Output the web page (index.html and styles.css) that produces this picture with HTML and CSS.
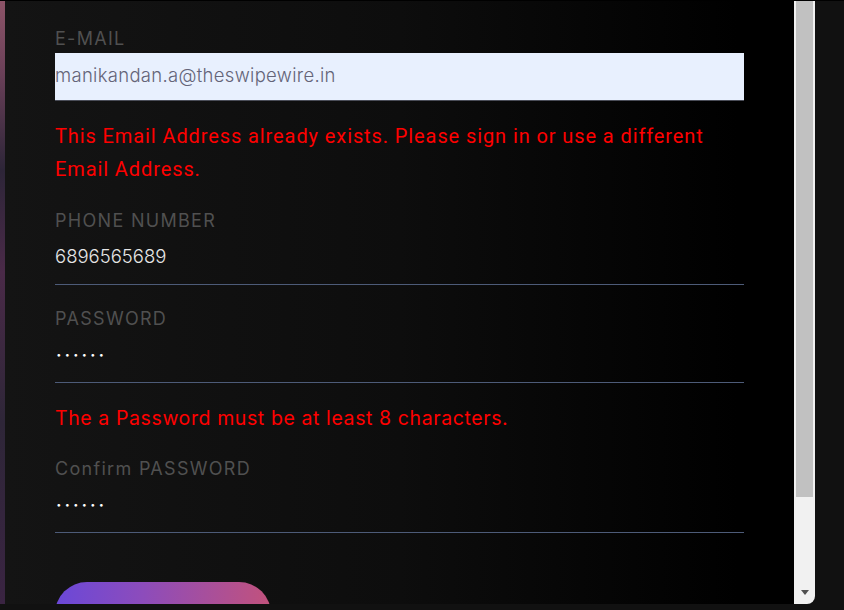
FILE: index.html
```html
<!DOCTYPE html>
<html lang="en">
<head>
<meta charset="utf-8">
<title>Sign up</title>
<link rel="stylesheet" href="styles.css">
</head>
<body>
<div class="window">
  <div class="edge"></div>
  <div class="panel">
    <form class="form">
      <div class="field">
        <label class="label">E-MAIL</label>
        <div class="input autofill">manikandan.a@theswipewire.in</div>
      </div>
      <p class="error condensed">This Email Address already exists. Please sign in or use a different Email Address.</p>
      <div class="field">
        <label class="label">PHONE NUMBER</label>
        <div class="input">6896565689</div>
      </div>
      <div class="field">
        <label class="label">PASSWORD</label>
        <div class="input dots">••••••</div>
      </div>
      <p class="error">The a Password must be at least 8 characters.</p>
      <div class="field">
        <label class="label">Confirm PASSWORD</label>
        <div class="input dots">••••••</div>
      </div>
      <button type="button" class="submit" aria-label="Sign Up"></button>
    </form>
  </div>
  <div class="scrollbar">
    <div class="thumb"></div>
    <svg class="arrow" width="8" height="5" viewBox="0 0 8 5"><path d="M0 0H8L4 5Z" fill="#505050"/></svg>
  </div>
</div>
</body>
</html>
```

FILE: styles.css
```css
html, body {
  margin: 0;
  padding: 0;
}
body {
  width: 844px;
  height: 610px;
  overflow: hidden;
  background: #111111;
  border-top: 1px solid #000;
  box-sizing: border-box;
  font-family: Inter, "Open Sans", sans-serif;
}
.window {
  display: flex;
  height: 603px;
  width: 815px;
}
.edge {
  width: 5px;
  flex: none;
  background: linear-gradient(#8d5468 0%, #6a4058 12%, #2d2538 28%, #4a2a48 45%, #2e2638 70%, #3a2442 100%);
}
.panel {
  flex: 1;
  overflow: hidden;
  background: linear-gradient(to right, #141414 0%, #0d0d0d 50%, #000 93%);
  padding-left: 50px;
  padding-right: 50px;
}
.form {
  display: flex;
  flex-direction: column;
  width: 689px;
  padding-top: 25px;
}
.field {
  display: flex;
  flex-direction: column;
}
.label {
  font-size: 18px;
  line-height: 24px;
  letter-spacing: 1.3px;
  color: #505050;
  padding-top: 1px;
  margin-bottom: 2px;
}
.input {
  box-sizing: border-box;
  height: 50px;
  padding-top: 9px;
  border-bottom: 1px solid #4d5b78;
  font-size: 18.5px;
  font-weight: 300;
  line-height: 24px;
  color: #e6e6e6;
}
.autofill {
  height: 48px;
  padding-top: 10px;
  background: #e8f0fe;
  color: #646478;
  border-bottom-color: #4a4d58;
  letter-spacing: 0.3px;
}
.dots {
  font-size: 10px;
  letter-spacing: 2.9px;
  color: #fff;
  padding-left: 1px;
}
.error {
  margin: 0;
  color: #ff0000;
  font-size: 19.5px;
  letter-spacing: 0.6px;
  line-height: 33px;
  padding-top: 19px;
  padding-bottom: 21px;
}
.condensed {
  font-family: "Liberation Sans Narrow", Roboto, sans-serif;
  font-size: 20px;
  letter-spacing: 0.9px;
  max-width: 668px;
  padding-top: 19px;
  padding-bottom: 22px;
}
.field + .field {
  margin-top: 21px;
}
.submit {
  margin-top: 49px;
  width: 216px;
  height: 64px;
  border: 0;
  border-radius: 32px;
  background: linear-gradient(to right, #6a48d8 0%, #8c4cbc 40%, #c2527c 100%);
  color: #fff;
  font-family: inherit;
  font-size: 18px;
  padding: 0;
}
.scrollbar {
  width: 21px;
  flex: none;
  background: #f1f1f1;
  border-bottom-right-radius: 8px;
  padding: 0 2px;
  box-sizing: border-box;
  display: flex;
  flex-direction: column;
  align-items: center;
}
.thumb {
  width: 17px;
  height: 496px;
  background: #c1c1c1;
}
.arrow {
  margin-top: auto;
  margin-bottom: 9px;
}
```
